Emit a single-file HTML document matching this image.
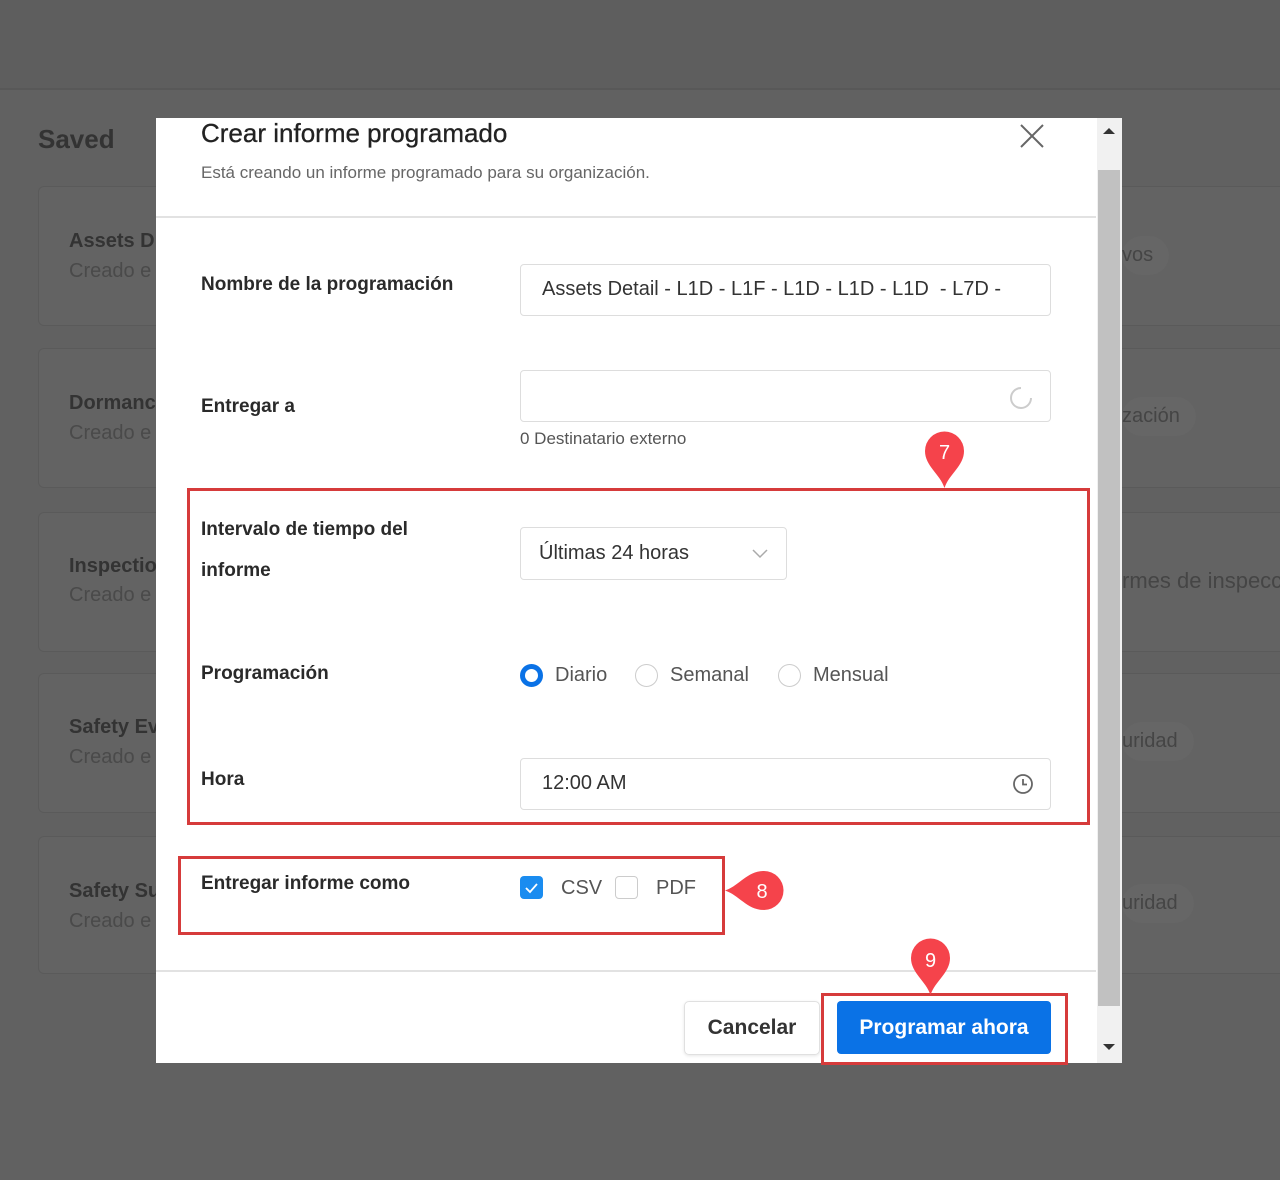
<!DOCTYPE html>
<html><head><meta charset="utf-8"><style>
*{box-sizing:border-box;margin:0;padding:0}
body{width:1280px;height:1180px;background:#616161;position:relative;overflow:hidden;font-family:"Liberation Sans",sans-serif}
.a{position:absolute;white-space:nowrap}
.top{left:0;top:0;width:1280px;height:90px;background:#5e5e5e;border-bottom:2px solid #585858}
.card{left:38px;width:1260px;background:#636363;border:1px solid #5a5a5a;border-radius:6px}
.ct{left:30px;font-size:20px;color:#333;font-weight:bold}
.cs{left:30px;font-size:20px;color:#4a4a4a}
.pill{font-size:20px;color:#454545;background:#666;border-radius:20px;padding:8px 16px 8px 0}
.modal{left:156px;top:118px;width:966px;height:945px;background:#fff}
.lbl{font-size:19px;font-weight:bold;color:#2a2a2a}
.inp{border:1px solid #ddd;border-radius:4px;background:#fff}
.txt{font-size:20px;color:#333}
.box{border:3px solid #d63b3b}
</style></head><body>
<div class="a top"></div>
<div class="a" style="left:38px;top:124px;font-size:26px;color:#333;font-weight:bold">Saved</div>

<div class="a card" style="top:186px;height:140px"><div class="a ct" style="top:43px">Assets D</div><div class="a cs" style="top:73px">Creado e</div></div>
<div class="a card" style="top:348px;height:140px"><div class="a ct" style="top:43px">Dormanc</div><div class="a cs" style="top:73px">Creado e</div></div>
<div class="a card" style="top:512px;height:140px"><div class="a ct" style="top:42px">Inspectio</div><div class="a cs" style="top:71px">Creado e</div></div>
<div class="a card" style="top:673px;height:140px"><div class="a ct" style="top:42px">Safety Ev</div><div class="a cs" style="top:72px">Creado e</div></div>
<div class="a card" style="top:836px;height:138px"><div class="a ct" style="top:43px">Safety Su</div><div class="a cs" style="top:73px">Creado e</div></div>
<div class="a pill" style="left:1122px;top:236px">vos</div>
<div class="a pill" style="left:1122px;top:397px">zación</div>
<div class="a" style="left:1122px;top:568px;font-size:22px;color:#454545">rmes de inspecc</div>
<div class="a pill" style="left:1122px;top:722px">uridad</div>
<div class="a pill" style="left:1122px;top:884px">uridad</div>

<div class="a modal">
 <div class="a" style="left:45px;top:0;font-size:26px;color:#222;font-weight:500;-webkit-text-stroke:0.3px #222">Crear informe programado</div>
 <div class="a" style="left:45px;top:45px;font-size:17px;color:#666">Está creando un informe programado para su organización.</div>
 <svg class="a" style="left:862px;top:4px" width="28" height="28"><path d="M3 3L25 25M25 3L3 25" stroke="#666" stroke-width="2"/></svg>
 <div class="a" style="left:0;top:98px;width:940px;height:2px;background:#e2e2e2"></div>

 <div class="a lbl" style="left:45px;top:156px">Nombre de la programación</div>
 <div class="a inp" style="left:364px;top:146px;width:531px;height:52px"><div class="a txt" style="left:21px;top:13px">Assets Detail - L1D - L1F - L1D - L1D - L1D &nbsp;- L7D -</div></div>

 <div class="a lbl" style="left:45px;top:278px">Entregar a</div>
 <div class="a inp" style="left:364px;top:252px;width:531px;height:52px">
  <svg class="a" style="left:488px;top:15px" width="24" height="24"><path d="M12 2A10 10 0 1 0 22 12" fill="none" stroke="#ccc" stroke-width="2"/></svg></div>
 <div class="a" style="left:364px;top:311px;font-size:17px;color:#555">0 Destinatario externo</div>

 <div class="a lbl" style="left:45px;top:391px;line-height:41px">Intervalo de tiempo del<br>informe</div>
 <div class="a inp" style="left:364px;top:409px;width:267px;height:53px"><div class="a txt" style="left:18px;top:14px">Últimas 24 horas</div>
  <svg class="a" style="left:231px;top:20px" width="16" height="12"><path d="M1 2L8 9L15 2" fill="none" stroke="#aaa" stroke-width="1.5"/></svg></div>

 <div class="a lbl" style="left:45px;top:545px">Programación</div>
 <div class="a" style="left:364px;top:546px;width:23px;height:23px;border:5px solid #0a72e6;border-radius:50%"></div>
 <div class="a txt" style="left:399px;top:546px;color:#555">Diario</div>
 <div class="a" style="left:479px;top:546px;width:23px;height:23px;border:1px solid #ccc;border-radius:50%"></div>
 <div class="a txt" style="left:514px;top:546px;color:#555">Semanal</div>
 <div class="a" style="left:622px;top:546px;width:23px;height:23px;border:1px solid #ccc;border-radius:50%"></div>
 <div class="a txt" style="left:657px;top:546px;color:#555">Mensual</div>

 <div class="a lbl" style="left:45px;top:651px">Hora</div>
 <div class="a inp" style="left:364px;top:640px;width:531px;height:52px"><div class="a txt" style="left:21px;top:13px">12:00 AM</div>
  <svg class="a" style="left:491px;top:14px" width="22" height="22"><circle cx="11" cy="11" r="9" fill="none" stroke="#666" stroke-width="1.8"/><path d="M11 6V11.5H15" fill="none" stroke="#666" stroke-width="1.8"/></svg></div>

 <div class="a lbl" style="left:45px;top:755px">Entregar informe como</div>
 <div class="a" style="left:364px;top:758px;width:23px;height:23px;background:#1a8cf0;border-radius:4px"><svg width="23" height="23"><path d="M6 12L10 16L17 8" fill="none" stroke="#fff" stroke-width="1.8"/></svg></div>
 <div class="a txt" style="left:405px;top:759px;color:#555">CSV</div>
 <div class="a" style="left:459px;top:758px;width:23px;height:23px;border:1px solid #ccc;border-radius:4px"></div>
 <div class="a txt" style="left:500px;top:759px;color:#555">PDF</div>

 <div class="a" style="left:0;top:852px;width:940px;height:2px;background:#e2e2e2"></div>
 <div class="a" style="left:528px;top:883px;width:136px;height:54px;border:1px solid #e0e0e0;border-radius:5px;box-shadow:0 1px 3px rgba(0,0,0,.1);font-size:21px;font-weight:bold;color:#333;text-align:center;line-height:52px">Cancelar</div>
 <div class="a" style="left:681px;top:883px;width:214px;height:53px;background:#0a72e6;border-radius:4px;font-size:21px;font-weight:bold;color:#fff;text-align:center;line-height:53px">Programar ahora</div>

 <div class="a" style="left:941px;top:0;width:25px;height:945px;background:#f1f1f1"></div>
 <div class="a" style="left:942px;top:52px;width:22px;height:836px;background:#c1c1c1"></div>
 <svg class="a" style="left:945px;top:8px" width="16" height="10"><path d="M2 8L8 2L14 8Z" fill="#333"/></svg>
 <svg class="a" style="left:945px;top:924px" width="16" height="10"><path d="M2 2L8 8L14 2Z" fill="#333"/></svg>
</div>

<div class="a box" style="left:187px;top:488px;width:903px;height:337px"></div>
<div class="a box" style="left:178px;top:856px;width:547px;height:79px"></div>
<div class="a box" style="left:821px;top:993px;width:247px;height:72px"></div>

<div class="a" style="left:924px;top:430px;width:41px;height:60px"><svg width="41" height="60"><path d="M20.5 58C16 44 1 36 1 21A19.5 19.5 0 0 1 40 21C40 36 25 44 20.5 58Z" fill="#f5434b"/><text x="20.5" y="29" fill="#fff" font-size="20" text-anchor="middle" font-family="Liberation Sans">7</text></svg></div>
<div class="a" style="left:910px;top:937px;width:41px;height:60px"><svg width="41" height="60"><path d="M20.5 58C16 44 1 36 1 21A19.5 19.5 0 0 1 40 21C40 36 25 44 20.5 58Z" fill="#f5434b"/><text x="20.5" y="30" fill="#fff" font-size="20" text-anchor="middle" font-family="Liberation Sans">9</text></svg></div>
<div class="a" style="left:724px;top:870px;width:64px;height:41px"><svg width="64" height="41"><path d="M1 20.5C15 16 23 1 40 1A19.5 19.5 0 0 1 40 40C23 40 15 25 1 20.5Z" fill="#f5434b"/><text x="38" y="28" fill="#fff" font-size="20" text-anchor="middle" font-family="Liberation Sans">8</text></svg></div>
</body></html>
